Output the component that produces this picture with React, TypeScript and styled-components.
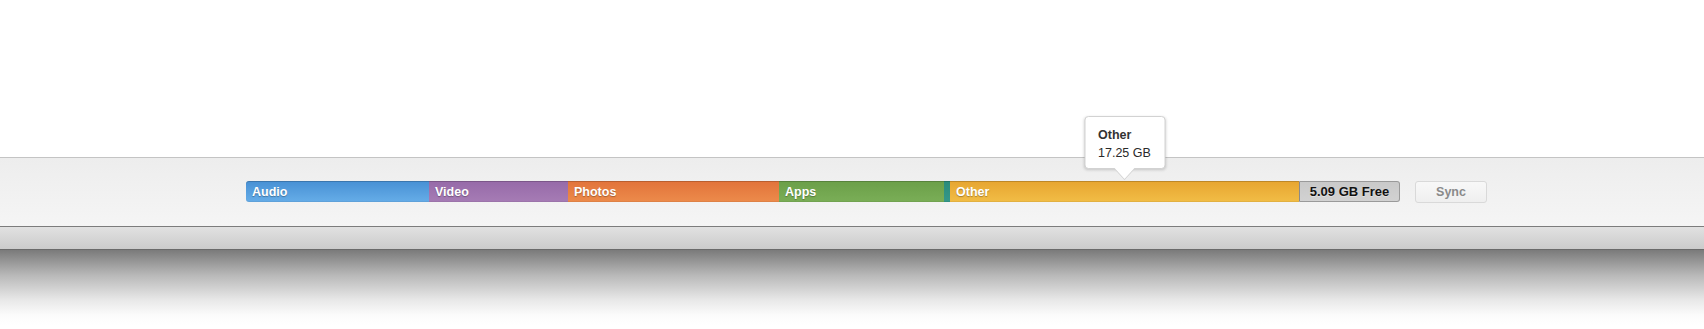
import styled, {createGlobalStyle} from "styled-components";

const GlobalStyle = createGlobalStyle`
    html, body {
        margin: 0;
        background: #ffffff;
        font-family: "Liberation Sans", Arial, sans-serif;
    }
`

type Part = {
    label: string
    width: number
    from: string
    to: string
    tip?: string
}

const parts: Part[] = [
    {label: "Audio", width: 183, from: "#4790d4", to: "#66ade8"},
    {label: "Video", width: 139, from: "#966aa8", to: "#a67cb5"},
    {label: "Photos", width: 211, from: "#e2733a", to: "#ec8b4b"},
    {label: "Apps", width: 165, from: "#6b9f48", to: "#7aae57"},
    {label: "", width: 5, from: "#2a8b7b", to: "#35988a"},
    {label: "Other", width: 349, from: "#e7a530", to: "#f1bd46", tip: "17.25 GB"},
]

export default function App() {
    return (
        <Page>
            <GlobalStyle/>
            <Content/>
            <Footer>
                <Bar>
                    {parts.map((p, i) => (
                        <Segment key={i} $from={p.from} $to={p.to} $first={i === 0}
                                 style={{width: p.width}}>
                            {p.label}
                            {p.tip && (
                                <Tooltip>
                                    <TipTitle>{p.label}</TipTitle>
                                    <TipValue>{p.tip}</TipValue>
                                </Tooltip>
                            )}
                        </Segment>
                    ))}
                    <Free>5.09 GB Free</Free>
                </Bar>
                <SyncButton>Sync</SyncButton>
            </Footer>
            <Band/>
            <Shadow/>
        </Page>
    );
}

const Page = styled.div`
    display: flex;
    flex-direction: column;
    height: 329px;
    overflow: hidden;
`

const Content = styled.div`
    height: 157px;
    background: #ffffff;
`

const Footer = styled.div`
    height: 68px;
    display: flex;
    align-items: center;
    padding-left: 246px;
    border-top: 1px solid #c4c4c4;
    border-bottom: 1px solid #7c7c7c;
    background: linear-gradient(#ededed, #f5f5f5);
`

const Bar = styled.div`
    display: flex;
    height: 21px;
    margin-top: -1px;
`

const Segment = styled.div<{ $from: string; $to: string; $first?: boolean }>`
    position: relative;
    box-sizing: border-box;
    height: 21px;
    padding: 1px 0 0 6px;
    background: linear-gradient(${p => p.$from}, ${p => p.$to});
    box-shadow: inset 0 1px 0 rgba(0, 0, 0, 0.18), inset 0 -1px 0 rgba(0, 0, 0, 0.06);
    border-radius: ${p => (p.$first ? "3px 0 0 3px" : "0")};
    color: #ffffff;
    font-size: 12.5px;
    font-weight: bold;
    line-height: 20px;
    text-shadow: 0 1px 1px rgba(0, 0, 0, 0.3);
    white-space: nowrap;
`

const Free = styled.div`
    box-sizing: border-box;
    width: 101px;
    height: 21px;
    padding-top: 1px;
    border: 1px solid #9a9a9a;
    border-left-color: #8a8a8a;
    border-radius: 0 3px 3px 0;
    background: linear-gradient(#c9c9c9, #d2d2d2);
    color: #111111;
    font-size: 13px;
    font-weight: bold;
    line-height: 18px;
    text-align: center;
    text-shadow: 0 1px 0 rgba(255, 255, 255, 0.4);
`

const Tooltip = styled.div`
    position: absolute;
    left: 50%;
    bottom: calc(100% + 12px);
    transform: translateX(-50%);
    box-sizing: border-box;
    width: 81px;
    height: 53px;
    padding: 9px 0 0 13px;
    background: #ffffff;
    border: 1px solid #d2d2d2;
    border-radius: 4px;
    box-shadow: 0 1px 3px rgba(0, 0, 0, 0.18);
    color: #333333;
    font-size: 12.5px;
    line-height: 18px;
    text-shadow: none;

    &::before, &::after {
        content: "";
        position: absolute;
        left: 50%;
        border-style: solid;
        border-color: transparent;
    }

    &::before {
        top: 100%;
        margin-left: -11px;
        border-width: 12px 11px 0 11px;
        border-top-color: #cfcfcf;
    }

    &::after {
        top: 100%;
        margin-left: -10px;
        border-width: 11px 10px 0 10px;
        border-top-color: #ffffff;
    }
`

const TipTitle = styled.div`
    font-weight: bold;
`

const TipValue = styled.div`
    font-weight: normal;
    color: #2a2a2a;
`

const SyncButton = styled.button`
    box-sizing: border-box;
    width: 72px;
    height: 22px;
    margin-left: 15px;
    margin-top: -1px;
    padding: 0;
    border: 1px solid #d9d9d9;
    border-radius: 3px;
    background: linear-gradient(#f8f8f8, #efefef);
    color: #8a8a8a;
    font-family: "Liberation Sans", Arial, sans-serif;
    font-size: 12.5px;
    font-weight: bold;
`

const Band = styled.div`
    height: 22px;
    border-bottom: 1px solid #6a6a6a;
    background: linear-gradient(#e1e1e1, #cbcbcb);
`

const Shadow = styled.div`
    flex: 1;
    background: linear-gradient(#7a7a7a 0px, #b8b8b8 25px, #e8e8e8 50px, #fbfbfb 65px, #ffffff 75px);
`
